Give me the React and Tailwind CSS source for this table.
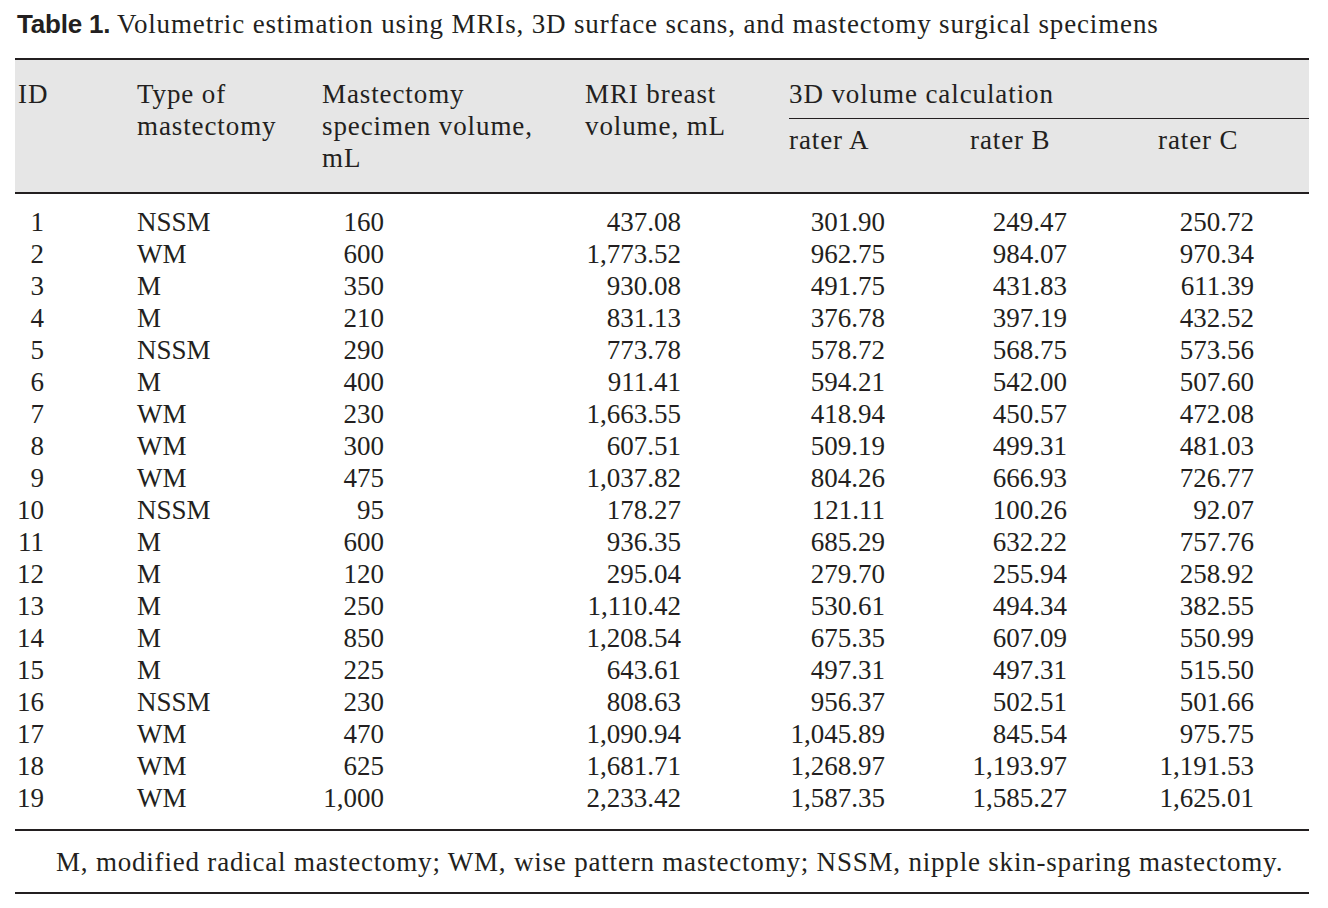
import React from "react";

const rows = [
  ["1", "NSSM", "160", "437.08", "301.90", "249.47", "250.72"],
  ["2", "WM", "600", "1,773.52", "962.75", "984.07", "970.34"],
  ["3", "M", "350", "930.08", "491.75", "431.83", "611.39"],
  ["4", "M", "210", "831.13", "376.78", "397.19", "432.52"],
  ["5", "NSSM", "290", "773.78", "578.72", "568.75", "573.56"],
  ["6", "M", "400", "911.41", "594.21", "542.00", "507.60"],
  ["7", "WM", "230", "1,663.55", "418.94", "450.57", "472.08"],
  ["8", "WM", "300", "607.51", "509.19", "499.31", "481.03"],
  ["9", "WM", "475", "1,037.82", "804.26", "666.93", "726.77"],
  ["10", "NSSM", "95", "178.27", "121.11", "100.26", "92.07"],
  ["11", "M", "600", "936.35", "685.29", "632.22", "757.76"],
  ["12", "M", "120", "295.04", "279.70", "255.94", "258.92"],
  ["13", "M", "250", "1,110.42", "530.61", "494.34", "382.55"],
  ["14", "M", "850", "1,208.54", "675.35", "607.09", "550.99"],
  ["15", "M", "225", "643.61", "497.31", "497.31", "515.50"],
  ["16", "NSSM", "230", "808.63", "956.37", "502.51", "501.66"],
  ["17", "WM", "470", "1,090.94", "1,045.89", "845.54", "975.75"],
  ["18", "WM", "625", "1,681.71", "1,268.97", "1,193.97", "1,191.53"],
  ["19", "WM", "1,000", "2,233.42", "1,587.35", "1,585.27", "1,625.01"],
];

export default function App() {
  return (
    <div
      className="w-[1328px] h-[908px] bg-white text-[#231f20] overflow-hidden"
      style={{ fontFamily: '"Liberation Serif", "Times New Roman", serif' }}
    >
      <div className="pt-[8px] pl-[17px] text-[27px] leading-[32px] whitespace-nowrap">
        <span
          className="font-bold text-[26px] tracking-[-0.2px]"
          style={{ fontFamily: '"Liberation Sans", Arial, sans-serif' }}
        >
          Table 1.
        </span>{" "}
        <span className="tracking-[0.85px]">
          Volumetric estimation using MRIs, 3D surface scans, and mastectomy surgical specimens
        </span>
      </div>

      <div className="ml-[15px] w-[1294px] mt-[18px] text-[27px] leading-[32px]">
        <div className="h-[2px] bg-[#231f20]" />
        <div className="bg-[#e6e6e6] flex pt-[18px] h-[132px] tracking-[0.9px]">
          <div className="w-[122px] pl-[3px]">ID</div>
          <div className="w-[185px]">
            Type of
            <br />
            mastectomy
          </div>
          <div className="w-[263px]">
            Mastectomy
            <br />
            specimen volume,
            <br />
            mL
          </div>
          <div className="w-[204px]">
            MRI breast
            <br />
            volume, mL
          </div>
          <div className="w-[520px] flex flex-col">
            <div>3D volume calculation</div>
            <div className="h-[1px] bg-[#231f20] mt-[8px]" />
            <div className="flex mt-[5px]">
              <div className="w-[181px]">rater A</div>
              <div className="w-[188px]">rater B</div>
              <div className="w-[151px]">rater C</div>
            </div>
          </div>
        </div>
        <div className="h-[2px] bg-[#231f20]" />

        <div className="pt-[12px] pb-[15px]">
          {rows.map((r) => (
            <div key={r[0]} className="flex h-[32px]">
              <div className="w-[122px]">
                <div className="w-[29px] text-right">{r[0]}</div>
              </div>
              <div className="w-[185px]">{r[1]}</div>
              <div className="w-[263px]">
                <div className="w-[62px] text-right">{r[2]}</div>
              </div>
              <div className="w-[204px]">
                <div className="w-[96px] text-right">{r[3]}</div>
              </div>
              <div className="w-[181px]">
                <div className="w-[96px] text-right">{r[4]}</div>
              </div>
              <div className="w-[188px]">
                <div className="w-[97px] text-right">{r[5]}</div>
              </div>
              <div className="w-[151px]">
                <div className="w-[96px] text-right">{r[6]}</div>
              </div>
            </div>
          ))}
        </div>

        <div className="h-[2px] bg-[#231f20]" />
        <div className="pt-[15px] pb-[14px] pl-[41px] whitespace-nowrap tracking-[0.8px]">
          M, modified radical mastectomy; WM, wise pattern mastectomy; NSSM, nipple skin-sparing mastectomy.
        </div>
        <div className="h-[2px] bg-[#231f20]" />
      </div>
    </div>
  );
}
